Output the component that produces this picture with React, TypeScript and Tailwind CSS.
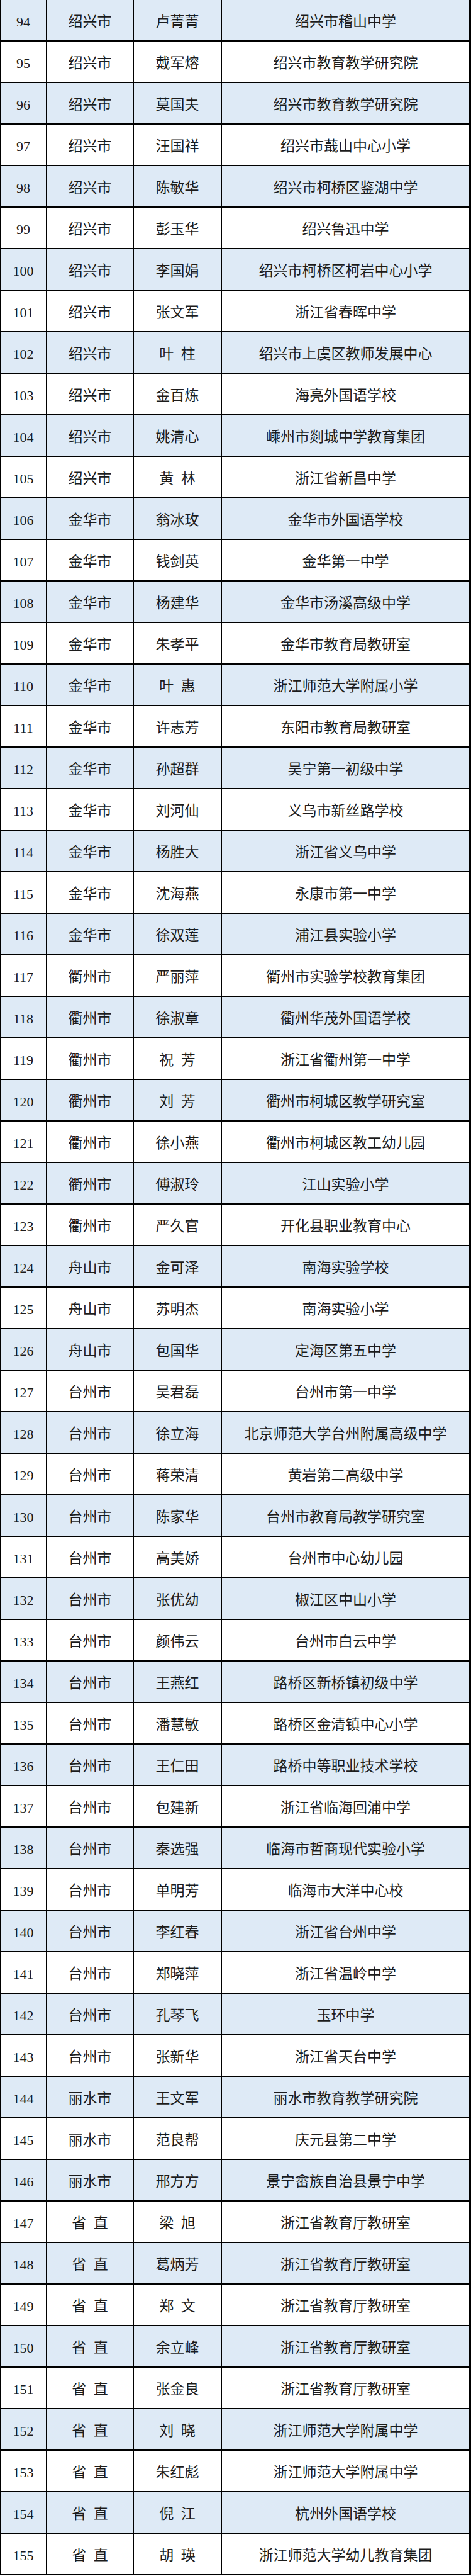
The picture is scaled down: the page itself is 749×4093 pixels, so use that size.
import React from 'react';

type Row = [number, string, string, string];

const rows: Row[] = [
  [94, '绍兴市', '卢菁菁', '绍兴市稽山中学'],
  [95, '绍兴市', '戴军熔', '绍兴市教育教学研究院'],
  [96, '绍兴市', '莫国夫', '绍兴市教育教学研究院'],
  [97, '绍兴市', '汪国祥', '绍兴市蕺山中心小学'],
  [98, '绍兴市', '陈敏华', '绍兴市柯桥区鉴湖中学'],
  [99, '绍兴市', '彭玉华', '绍兴鲁迅中学'],
  [100, '绍兴市', '李国娟', '绍兴市柯桥区柯岩中心小学'],
  [101, '绍兴市', '张文军', '浙江省春晖中学'],
  [102, '绍兴市', '叶  柱', '绍兴市上虞区教师发展中心'],
  [103, '绍兴市', '金百炼', '海亮外国语学校'],
  [104, '绍兴市', '姚清心', '嵊州市剡城中学教育集团'],
  [105, '绍兴市', '黄  林', '浙江省新昌中学'],
  [106, '金华市', '翁冰玫', '金华市外国语学校'],
  [107, '金华市', '钱剑英', '金华第一中学'],
  [108, '金华市', '杨建华', '金华市汤溪高级中学'],
  [109, '金华市', '朱孝平', '金华市教育局教研室'],
  [110, '金华市', '叶  惠', '浙江师范大学附属小学'],
  [111, '金华市', '许志芳', '东阳市教育局教研室'],
  [112, '金华市', '孙超群', '吴宁第一初级中学'],
  [113, '金华市', '刘河仙', '义乌市新丝路学校'],
  [114, '金华市', '杨胜大', '浙江省义乌中学'],
  [115, '金华市', '沈海燕', '永康市第一中学'],
  [116, '金华市', '徐双莲', '浦江县实验小学'],
  [117, '衢州市', '严丽萍', '衢州市实验学校教育集团'],
  [118, '衢州市', '徐淑章', '衢州华茂外国语学校'],
  [119, '衢州市', '祝  芳', '浙江省衢州第一中学'],
  [120, '衢州市', '刘  芳', '衢州市柯城区教学研究室'],
  [121, '衢州市', '徐小燕', '衢州市柯城区教工幼儿园'],
  [122, '衢州市', '傅淑玲', '江山实验小学'],
  [123, '衢州市', '严久官', '开化县职业教育中心'],
  [124, '舟山市', '金可泽', '南海实验学校'],
  [125, '舟山市', '苏明杰', '南海实验小学'],
  [126, '舟山市', '包国华', '定海区第五中学'],
  [127, '台州市', '吴君磊', '台州市第一中学'],
  [128, '台州市', '徐立海', '北京师范大学台州附属高级中学'],
  [129, '台州市', '蒋荣清', '黄岩第二高级中学'],
  [130, '台州市', '陈家华', '台州市教育局教学研究室'],
  [131, '台州市', '高美娇', '台州市中心幼儿园'],
  [132, '台州市', '张优幼', '椒江区中山小学'],
  [133, '台州市', '颜伟云', '台州市白云中学'],
  [134, '台州市', '王燕红', '路桥区新桥镇初级中学'],
  [135, '台州市', '潘慧敏', '路桥区金清镇中心小学'],
  [136, '台州市', '王仁田', '路桥中等职业技术学校'],
  [137, '台州市', '包建新', '浙江省临海回浦中学'],
  [138, '台州市', '秦选强', '临海市哲商现代实验小学'],
  [139, '台州市', '单明芳', '临海市大洋中心校'],
  [140, '台州市', '李红春', '浙江省台州中学'],
  [141, '台州市', '郑晓萍', '浙江省温岭中学'],
  [142, '台州市', '孔琴飞', '玉环中学'],
  [143, '台州市', '张新华', '浙江省天台中学'],
  [144, '丽水市', '王文军', '丽水市教育教学研究院'],
  [145, '丽水市', '范良帮', '庆元县第二中学'],
  [146, '丽水市', '邢方方', '景宁畲族自治县景宁中学'],
  [147, '省  直', '梁  旭', '浙江省教育厅教研室'],
  [148, '省  直', '葛炳芳', '浙江省教育厅教研室'],
  [149, '省  直', '郑  文', '浙江省教育厅教研室'],
  [150, '省  直', '余立峰', '浙江省教育厅教研室'],
  [151, '省  直', '张金良', '浙江省教育厅教研室'],
  [152, '省  直', '刘  晓', '浙江师范大学附属中学'],
  [153, '省  直', '朱红彪', '浙江师范大学附属中学'],
  [154, '省  直', '倪  江', '杭州外国语学校'],
  [155, '省  直', '胡  瑛', '浙江师范大学幼儿教育集团'],
];

const cell = 'flex items-center justify-center whitespace-pre pt-[5px]';

export default function App() {
  return (
    <div className="w-[749px] bg-white font-['Liberation_Serif','Noto_Sans_CJK_SC',serif] text-[23px] leading-none text-[#1c1c1c]">
      <div className="border-l border-r-[3px] border-black">
        {rows.map(([no, city, name, school]) => (
          <div
            key={no}
            className={`grid h-[66px] grid-cols-[74px_138px_140px_1fr] border-b-2 border-black ${
              no % 2 === 0 ? 'bg-[#deeaf6]' : 'bg-white'
            }`}
          >
            <div className={`${cell} border-r-2 border-black text-[22px]`}>{no}</div>
            <div className={`${cell} border-r-2 border-black`}>{city}</div>
            <div className={`${cell} border-r-2 border-black`}>{name}</div>
            <div className={cell}>{school}</div>
          </div>
        ))}
      </div>
    </div>
  );
}
